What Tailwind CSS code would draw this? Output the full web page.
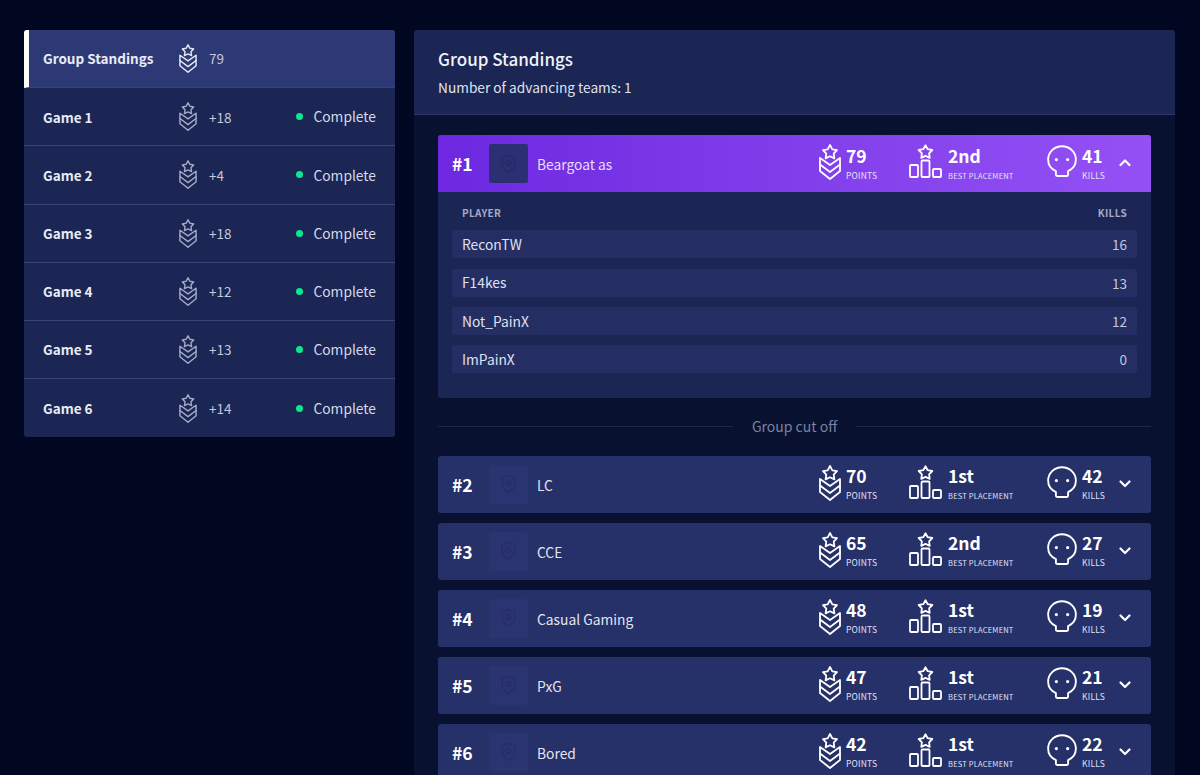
<!DOCTYPE html>
<html lang="en">
  <head>
    <meta charset="UTF-8" />
    <title>Group Standings</title>
    <script src="https://cdn.jsdelivr.net/npm/@tailwindcss/browser@4"></script>
  </head>
  <body class="bg-[#010720] h-[775px] overflow-hidden font-['Noto_Sans_CJK_SC','Noto_Sans',sans-serif] text-white">
    <svg class="hidden">
      <symbol id="points" viewBox="0 0 22 36" fill="none" stroke="currentColor" stroke-width="1.800" stroke-linejoin="round" stroke-linecap="round">
        <path d="M11 1l2.300 4.300 4.700.8-3.300 3.500.7 4.800-4.400-2.100-4.400 2.100.7-4.800L4 6.100l4.700-.8z" />
        <path d="M1 14l10 7 10-7v13l-10 8-10-8z" />
        <path d="M1 20.500l10 7.500 10-7.500" />
      </symbol>
      <symbol id="placement" viewBox="0 0 33 34" fill="none" stroke="currentColor" stroke-width="1.800" stroke-linejoin="round">
        <path d="M16.500 1.200l2.200 4 4.600.8-3.200 3.300.6 4.600-4.200-2-4.200 2 .6-4.600L9.700 6l4.600-.8z" />
        <rect x="1" y="21" width="8" height="12" rx="1" />
        <rect x="12.500" y="16.500" width="8" height="16.500" rx="1" />
        <rect x="24" y="25" width="8" height="8" rx="1" />
      </symbol>
      <symbol id="skull" viewBox="0 0 32 34" fill="none" stroke="currentColor" stroke-width="2" stroke-linejoin="round">
        <path d="M16 1.200C7.800 1.200 1.200 7.600 1.200 15.500c0 5.800 3.400 10.200 8.300 12.200v4c0 .8.600 1.300 1.300 1.300h10.400c.7 0 1.300-.5 1.300-1.300v-4c4.900-2 8.300-6.400 8.300-12.200C30.800 7.600 24.200 1.200 16 1.200z" />
        <circle cx="10" cy="15.500" r="1.700" fill="currentColor" stroke="none" />
        <circle cx="22" cy="15.500" r="1.700" fill="currentColor" stroke="none" />
      </symbol>
      <symbol id="shield" viewBox="0 0 24 28" fill="none" stroke="currentColor" stroke-width="2">
        <path d="M12 2l9 3v8c0 6-4 10-9 13-5-3-9-7-9-13V5z" />
        <path d="M12 9l3 2v3.500l-3 2-3-2V11z" />
      </symbol>
    </svg>

    <div class="flex gap-[19px] pl-6 pr-[25px] pt-[30px] items-start">
      <div id="sidebar" class="w-[371px] shrink-0 rounded-[3px] overflow-hidden bg-[#1b2654]"></div>

      <div class="flex-1 rounded-t-[3px] overflow-hidden">
        <div class="h-[85px] bg-[#1b2654] border-b border-[#2c3767] px-6 pt-[17px]">
          <h1 class="text-[17px] leading-[23px] font-medium text-[#f1f3fa]">Group Standings</h1>
          <p class="mt-[7px] text-[13.700px] leading-[20px] text-[#dfe3f0]">Number of advancing teams: 1</p>
        </div>
        <div class="bg-[#091130] px-6 pt-5 pb-6">
          <div id="leader" class="rounded-[3px] overflow-hidden bg-[#1b2654]"></div>
          <div class="flex items-center gap-[19px] h-[58px] text-[14px] text-[#7b82a0]">
            <div class="flex-1 h-px bg-[#1e2748]"></div>
            <span>Group cut off</span>
            <div class="flex-1 h-px bg-[#1e2748]"></div>
          </div>
          <div id="rest" class="flex flex-col gap-2.5"></div>
        </div>
      </div>
    </div>

    <script>
      const games = [
        ["Game 1", "+18"], ["Game 2", "+4"], ["Game 3", "+18"],
        ["Game 4", "+12"], ["Game 5", "+13"], ["Game 6", "+14"],
      ];
      const players = [["ReconTW", 16], ["F14kes", 13], ["Not_PainX", 12], ["ImPainX", 0]];
      const teams = [
        [2, "LC", 70, "1st", 42], [3, "CCE", 65, "2nd", 27], [4, "Casual Gaming", 48, "1st", 19],
        [5, "PxG", 47, "1st", 21], [6, "Bored", 42, "1st", 22],
      ];

      function navRow(name, score, active, status) {
        const rowClass = active
          ? "bg-[#2d3975] border-l-[5px] border-l-white pl-[14px]"
          : "pl-[19px]";
        const iconClass = active ? "text-[#e6e9f5]" : "text-[#a3a9c6]";
        return `<div class="flex items-center h-[58.200px] border-b border-[#3a4470] last:border-b-0 pr-[19px] ${rowClass}">
          <span class="w-[136px] text-[13.500px] font-bold text-[#e9ecf6]">${name}</span>
          <svg class="w-[18px] h-[29px] ${iconClass}"><use href="#points" /></svg>
          <span class="ml-[12px] text-[13.500px] text-[#c3c8dc]">${score}</span>
          ${status ? `<span class="ml-auto flex items-center text-[13.800px] text-[#d6daea]"><i class="w-[7px] h-[7px] rounded-full bg-[#0be88f] mr-[10px]"></i>Complete</span>` : ""}
        </div>`;
      }

      function teamRow(rank, name, points, best, kills, open) {
        const rowClass = open ? "bg-gradient-to-r from-[#6d28e0] to-[#9550f5]" : "bg-[#263069] rounded-[3px]";
        const logoClass = open ? "bg-[#2c2f72] text-[#262a68]" : "bg-[#2a3470] text-[#262e6a]";
        const nameClass = open ? "text-[#eadcff]" : "text-[#e3e6f2]";
        const chevron = open ? "M1.500 8l4.500-4.500 4.500 4.500" : "M1.500 3.500l4.500 4.500 4.500-4.500";
        return `<div class="flex items-center h-[57px] pl-[14px] ${rowClass}">
          <span class="w-[37px] mt-[1px] text-[17.500px] font-bold">#${rank}</span>
          <div class="w-[39px] h-[39px] rounded-[2px] flex items-center justify-center ${logoClass}">
            <svg class="w-[17px] h-[20px]"><use href="#shield" /></svg>
          </div>
          <span class="ml-[9px] mt-[1px] text-[13.800px] ${nameClass}">${name}</span>
          <div class="ml-auto flex items-center">
            <svg class="w-[22px] h-[36px] -mt-[3px]"><use href="#points" /></svg>
            <div class="w-[68px] pl-[5px]">
              <div class="text-[17.500px] leading-[20px] font-bold">${points}</div>
              <div class="mt-[3px] text-[8.500px] leading-[13px] tracking-[0.2px] text-[#e4e2f5]">POINTS</div>
            </div>
            <svg class="w-[33px] h-[34px] -mt-[5px]"><use href="#placement" /></svg>
            <div class="w-[105px] pl-[6px]">
              <div class="text-[17.500px] leading-[20px] font-bold">${best}</div>
              <div class="mt-[3px] text-[7.500px] leading-[13px] tracking-[0.2px] text-[#e4e2f5]">BEST PLACEMENT</div>
            </div>
            <svg class="w-[30px] h-[34px] -mt-[5px]"><use href="#skull" /></svg>
            <div class="w-[42px] pl-[5px]">
              <div class="text-[17.500px] leading-[20px] font-bold">${kills}</div>
              <div class="mt-[3px] text-[8.500px] leading-[13px] tracking-[0.2px] text-[#e4e2f5]">KILLS</div>
            </div>
            <svg class="w-[12px] h-[11px] mr-[20px] -mt-[2px]" viewBox="0 0 12 11" fill="none" stroke="currentColor" stroke-width="2.200" stroke-linecap="round" stroke-linejoin="round"><path d="${chevron}" /></svg>
          </div>
        </div>`;
      }

      function playerTable() {
        const rows = players.map(([name, kills]) => `
          <div class="flex items-center justify-between h-[28px] rounded-[2px] bg-[#252e63] px-[10px] text-[13.800px] text-[#dfe2f0]">
            <span>${name}</span><span class="text-[13.500px] text-[#c3c8dc]">${kills}</span>
          </div>`).join("");
        return `<div class="px-[14px] pt-[13px] pb-[24.500px]">
          <div class="flex justify-between px-[10px] h-[24px] text-[10px] leading-[16px] font-bold tracking-[0.3px] text-[#a3a9c6]"><span>PLAYER</span><span>KILLS</span></div>
          <div class="flex flex-col gap-[10.400px] mt-[1.300px]">${rows}</div>
        </div>`;
      }

      document.getElementById("sidebar").innerHTML =
        navRow("Group Standings", "79", true, false) +
        games.map(([name, score]) => navRow(name, score, false, true)).join("");
      document.getElementById("leader").innerHTML =
        teamRow(1, "Beargoat as", 79, "2nd", 41, true) + playerTable();
      document.getElementById("rest").innerHTML =
        teams.map((t) => teamRow(t[0], t[1], t[2], t[3], t[4], false)).join("");
    </script>
  </body>
</html>
